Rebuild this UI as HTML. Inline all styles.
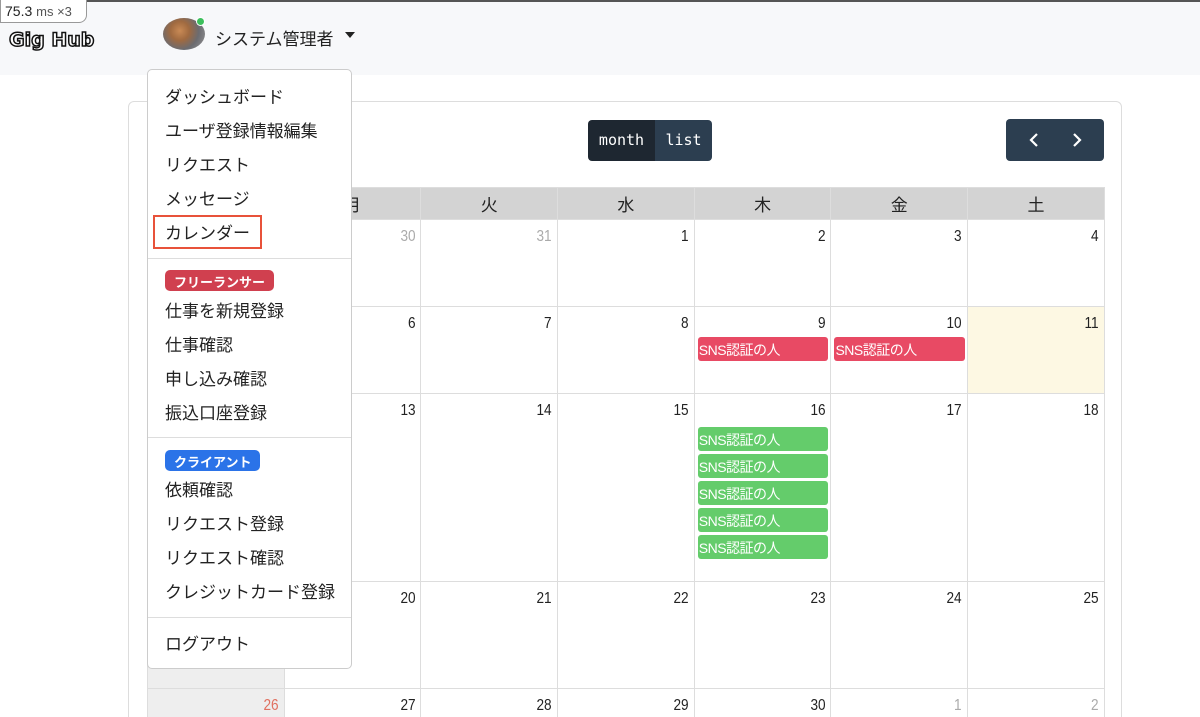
<!DOCTYPE html>
<html><head><meta charset="utf-8"><style>
*{box-sizing:border-box;margin:0;padding:0}
html,body{width:1200px;height:717px;overflow:hidden}
body{background:#fff;font-family:"Liberation Sans","Noto Sans CJK JP",sans-serif;color:#222;position:relative}
.hdr{position:absolute;left:0;top:0;width:1200px;height:75px;background:#f7f8fa;border-top:2px solid #555}
.fps{position:absolute;left:0;top:0;height:23px;width:87px;background:#fff;border:1px solid #999;border-top:none;border-radius:0 0 8px 0;font-size:14px;padding:3px 4px;color:#222}
.fps small{font-size:13px;color:#555}
.logo{position:absolute;left:9px;top:29px;font-size:19px;font-weight:bold;color:#fff;-webkit-text-stroke:1.5px #111;letter-spacing:0;font-family:"DejaVu Sans",sans-serif}
.av{position:absolute;left:163px;top:18px;width:42px;height:32px;border-radius:50%;background:radial-gradient(circle at 40% 40%,#c98a55 0,#a06a40 30%,#6b6b70 60%,#999 100%)}
.dot{position:absolute;left:196px;top:17px;width:9px;height:9px;border-radius:50%;background:#3cbf5c;border:1px solid #fff}
.user{position:absolute;left:215px;top:25px;font-size:17px;color:#222}
.caret{position:absolute;left:345px;top:32px;border:5px solid transparent;border-top:6px solid #222}
.card{position:absolute;left:128px;top:101px;width:994px;height:640px;border:1px solid #ddd;border-radius:6px}
.btns{position:absolute;left:588px;top:120px;height:41px;width:124px;display:flex;border-radius:4px;overflow:hidden;font-family:"DejaVu Sans Mono","Liberation Mono",monospace;font-size:15px;color:#fff}
.btns div{padding:11px 0;text-align:center}
.nav{position:absolute;left:1006px;top:119px;width:98px;height:42px;background:#2c3e50;border-radius:4px;color:#fff}
table{position:absolute;left:147px;top:187px;border-collapse:collapse;table-layout:fixed;width:957px}
td,th{border:1px solid #ddd;width:136.7px;vertical-align:top}
th{background:#d3d3d3;height:32px;font-weight:normal;font-size:17px;vertical-align:middle}
td .n{text-align:right;padding:8px 6px 0 0;font-size:16px;transform:scaleX(.85);transform-origin:right}
.g{color:#aaa}
.ev{margin:4px 2px 0 3px;height:24px;border-radius:3px;color:#fff;font-size:14px;padding:3px 1px;white-space:nowrap;letter-spacing:-.5px}
.r{background:#e84a64}.gr{background:#64cc6b;margin-top:3px}
.today{background:#fdf8e3}
.sun{background:#eee}
.menu{position:absolute;left:147px;top:69px;width:205px;height:600px;background:#fff;border:1px solid #ccc;border-radius:5px;font-size:17px;color:#222}
.mi{position:absolute;left:17px}
.sep{position:absolute;left:0;width:203px;border-top:1px solid #ddd}
.badge{position:absolute;left:17px;height:21px;border-radius:5px;color:#fff;font-size:13px;font-weight:bold;padding:2px 9px}
</style></head><body>
<div class="hdr"></div>
<div class="fps">75.3 <small>ms ×3</small></div>
<div class="logo">Gig Hub</div>
<div class="av"></div><div class="dot"></div>
<div class="user">システム管理者</div><div class="caret"></div>
<div class="card"></div>
<div class="btns"><div style="background:#1e2731;width:67px">month</div><div style="background:#2c3e50;width:57px">list</div></div>
<div class="nav"><svg width="98" height="42"><path d="M31 15l-6 6 6 6M68 15l6 6-6 6" stroke="#fff" stroke-width="2.2" fill="none"/></svg></div>
<table>
<tr><th>日</th><th>月</th><th>火</th><th>水</th><th>木</th><th>金</th><th>土</th></tr>
<tr style="height:87px"><td class="sun"></td><td><div class="n g">30</div></td><td><div class="n g">31</div></td><td><div class="n">1</div></td><td><div class="n">2</div></td><td><div class="n">3</div></td><td><div class="n">4</div></td></tr>
<tr style="height:87px"><td class="sun"></td><td><div class="n">6</div></td><td><div class="n">7</div></td><td><div class="n">8</div></td><td><div class="n">9</div><div class="ev r">SNS認証の人</div></td><td><div class="n">10</div><div class="ev r">SNS認証の人</div></td><td class="today"><div class="n">11</div></td></tr>
<tr style="height:188px"><td class="sun"></td><td><div class="n">13</div></td><td><div class="n">14</div></td><td><div class="n">15</div></td><td><div class="n">16</div><div class="ev gr" style="margin-top:7px">SNS認証の人</div><div class="ev gr">SNS認証の人</div><div class="ev gr">SNS認証の人</div><div class="ev gr">SNS認証の人</div><div class="ev gr">SNS認証の人</div></td><td><div class="n">17</div></td><td><div class="n">18</div></td></tr>
<tr style="height:107px"><td class="sun"><div class="ev gr" style="margin-top:58px;height:12px"></div></td><td><div class="n">20</div></td><td><div class="n">21</div></td><td><div class="n">22</div></td><td><div class="n">23</div></td><td><div class="n">24</div></td><td><div class="n">25</div></td></tr>
<tr style="height:40px"><td class="sun"><div class="n" style="color:#e07060">26</div></td><td><div class="n">27</div></td><td><div class="n">28</div></td><td><div class="n">29</div></td><td><div class="n">30</div></td><td><div class="n g">1</div></td><td><div class="n g">2</div></td></tr>
</table>
<div class="menu">
<div class="mi" style="top:13px">ダッシュボード</div>
<div class="mi" style="top:47px">ユーザ登録情報編集</div>
<div class="mi" style="top:81px">リクエスト</div>
<div class="mi" style="top:115px">メッセージ</div>
<div style="position:absolute;left:5px;top:145px;width:109px;height:34px;border:2px solid #e8523a"></div>
<div class="mi" style="top:149px">カレンダー</div>
<div class="sep" style="top:188px"></div>
<div class="badge" style="top:200px;background:#d0404f">フリーランサー</div>
<div class="mi" style="top:227px">仕事を新規登録</div>
<div class="mi" style="top:261px">仕事確認</div>
<div class="mi" style="top:295px">申し込み確認</div>
<div class="mi" style="top:329px">振込口座登録</div>
<div class="sep" style="top:367px"></div>
<div class="badge" style="top:380px;background:#2b73e8">クライアント</div>
<div class="mi" style="top:406px">依頼確認</div>
<div class="mi" style="top:440px">リクエスト登録</div>
<div class="mi" style="top:474px">リクエスト確認</div>
<div class="mi" style="top:508px">クレジットカード登録</div>
<div class="sep" style="top:547px"></div>
<div class="mi" style="top:560px">ログアウト</div>
</div>
</body></html>
